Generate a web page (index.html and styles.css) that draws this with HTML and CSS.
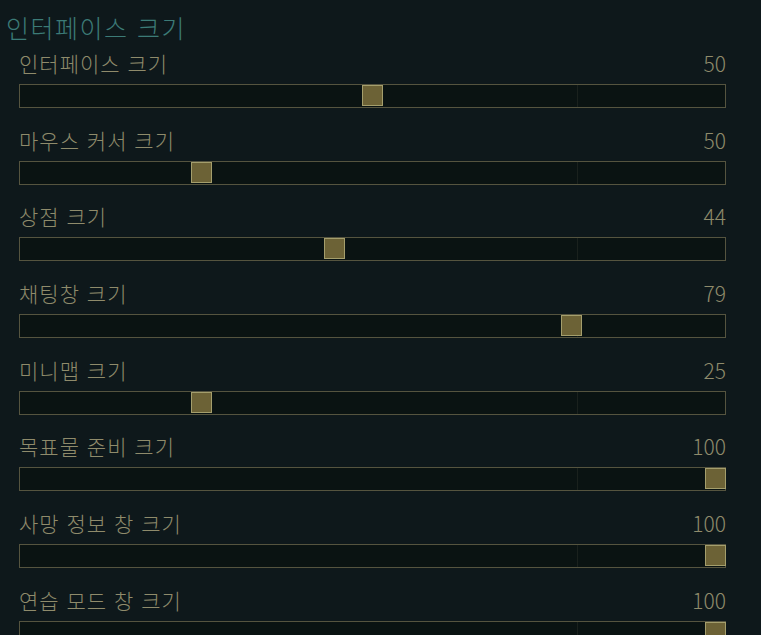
FILE: index.html
```html
<!DOCTYPE html>
<html lang="ko">
<head>
<meta charset="utf-8">
<title>인터페이스 크기</title>
<link rel="stylesheet" href="styles.css">
</head>
<body>
<div class="page">
  <h1 class="heading">인터페이스 크기</h1>
  <div class="list">
    <div class="row">
      <div class="row-head"><span class="label">인터페이스 크기</span><span class="value">50</span></div>
      <div class="track"><span class="mark"></span><span class="thumb" style="left:342px"></span></div>
    </div>
    <div class="row">
      <div class="row-head"><span class="label">마우스 커서 크기</span><span class="value">50</span></div>
      <div class="track"><span class="mark"></span><span class="thumb" style="left:171px"></span></div>
    </div>
    <div class="row">
      <div class="row-head"><span class="label">상점 크기</span><span class="value">44</span></div>
      <div class="track"><span class="mark"></span><span class="thumb" style="left:304px"></span></div>
    </div>
    <div class="row">
      <div class="row-head"><span class="label">채팅창 크기</span><span class="value">79</span></div>
      <div class="track"><span class="mark"></span><span class="thumb" style="left:541px"></span></div>
    </div>
    <div class="row">
      <div class="row-head"><span class="label">미니맵 크기</span><span class="value">25</span></div>
      <div class="track"><span class="mark"></span><span class="thumb" style="left:171px"></span></div>
    </div>
    <div class="row">
      <div class="row-head"><span class="label">목표물 준비 크기</span><span class="value">100</span></div>
      <div class="track"><span class="mark"></span><span class="thumb" style="left:685px"></span></div>
    </div>
    <div class="row">
      <div class="row-head"><span class="label">사망 정보 창 크기</span><span class="value">100</span></div>
      <div class="track"><span class="mark"></span><span class="thumb" style="left:685px"></span></div>
    </div>
    <div class="row">
      <div class="row-head"><span class="label">연습 모드 창 크기</span><span class="value">100</span></div>
      <div class="track"><span class="mark"></span><span class="thumb" style="left:685px"></span></div>
    </div>
  </div>
</div>
</body>
</html>
```
FILE: styles.css
```css
html, body {
  margin: 0;
  padding: 0;
  background: #0e181b;
  height: 100%;
  overflow: hidden;
}
body {
  font-family: "Noto Sans CJK KR", "Noto Sans", sans-serif;
}
.page {
  padding: 10px 35px 0 6px;
}
.heading {
  margin: 0;
  font-size: 25px;
  line-height: 34px;
  font-weight: 300;
  letter-spacing: 1.5px;
  color: #3c7b77;
}
.list {
  display: flex;
  flex-direction: column;
  gap: 18.7px;
  margin-top: 6px;
  padding-left: 13px;
}
.row {
  display: flex;
  flex-direction: column;
  gap: 4px;
}
.row-head {
  display: flex;
  justify-content: space-between;
  align-items: flex-start;
  height: 30px;
  font-size: 21px;
  line-height: 26px;
  font-weight: 300;
  color: #8f8b6b;
}
.label {
  letter-spacing: 1px;
}
.value {
  letter-spacing: 0;
}
.track {
  position: relative;
  height: 24px;
  box-sizing: border-box;
  border: 1px solid #55543f;
  background: #0a1312;
}
.mark {
  position: absolute;
  left: 557px;
  top: 0;
  bottom: 0;
  width: 1px;
  background: #1a211d;
}
.thumb {
  position: absolute;
  top: 0;
  width: 21px;
  height: 21px;
  box-sizing: border-box;
  border: 1px solid #a49e6c;
  background: #6c6236;
}
```
